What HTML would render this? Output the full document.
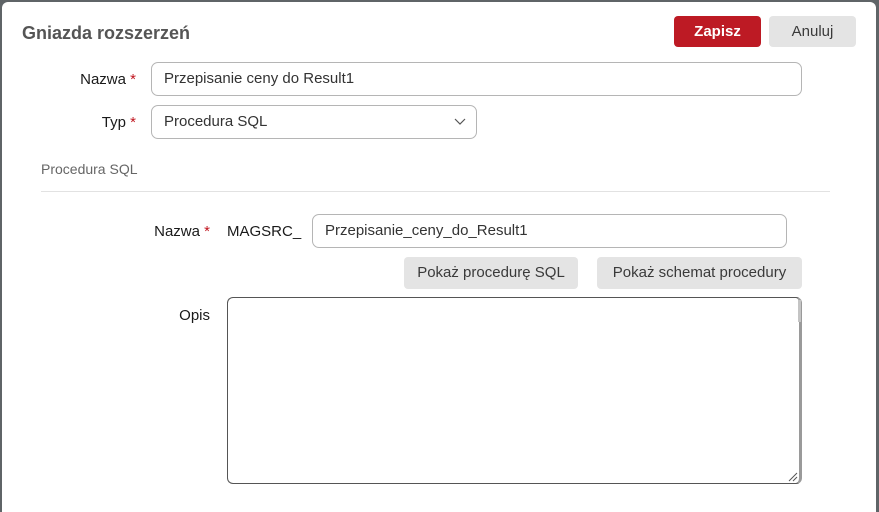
<!DOCTYPE html>
<html><head><meta charset="utf-8"><style>
*{box-sizing:border-box}
html{overflow:hidden;width:879px;height:512px}
body{margin:0;width:879px;height:512px;background:#5f6467;font-family:"Liberation Sans",Roboto,sans-serif;position:relative;overflow:hidden}
.dlg{position:absolute;left:2px;top:2px;width:874px;height:520px;background:#fff;border-radius:6px 6px 0 0}
.a{position:absolute}
.t{font-size:18px;font-weight:bold;color:#555;left:22px;top:23px}
.lbl{font-size:15px;color:#1a1a1a;text-align:right}
.st{color:#c0141e}
.inp{border:1px solid #b5b5b5;border-radius:7px;font-size:15px;color:#333;padding-left:12px;line-height:32px;height:34px}
.btn{border-radius:4px;font-size:15px;text-align:center;line-height:31px;height:31px;color:#3a3a3a;background:#e4e4e4}
</style></head><body>
<div class="dlg"></div>
<div class="a t">Gniazda rozszerzeń</div>
<div class="a btn" style="left:674px;top:16px;width:87px;background:#bd1a24;color:#fff;font-weight:bold">Zapisz</div>
<div class="a btn" style="left:769px;top:16px;width:87px">Anuluj</div>
<div class="a lbl" style="left:60px;top:71px;width:76px">Nazwa <span class="st">*</span></div>
<div class="a inp" style="left:151px;top:62px;width:651px">Przepisanie ceny do Result1</div>
<div class="a lbl" style="left:60px;top:114px;width:76px">Typ <span class="st">*</span></div>
<div class="a inp" style="left:151px;top:105px;width:326px">Procedura SQL
<svg style="position:absolute;right:10px;top:12px" width="12" height="8"><path d="M1 1L6 6L11 1" stroke="#555" fill="none" stroke-width="1.2"/></svg></div>
<div class="a" style="left:41px;top:161px;font-size:14px;color:#666">Procedura SQL</div>
<div class="a" style="left:41px;top:191px;width:789px;height:1px;background:#e2e2e2"></div>
<div class="a lbl" style="left:130px;top:223px;width:80px">Nazwa <span class="st">*</span></div>
<div class="a lbl" style="left:227px;top:223px;text-align:left">MAGSRC_</div>
<div class="a inp" style="left:312px;top:214px;width:475px">Przepisanie_ceny_do_Result1</div>
<div class="a btn" style="left:404px;top:257px;width:174px;height:32px;line-height:31px">Pokaż procedurę SQL</div>
<div class="a btn" style="left:597px;top:257px;width:205px;height:32px;line-height:31px">Pokaż schemat procedury</div>
<div class="a lbl" style="left:150px;top:307px;width:60px">Opis</div>
<div class="a" style="left:227px;top:297px;width:575px;height:187px;border:1px solid #555;border-right:3px solid #9a9a9a;border-radius:6px"></div>
<div class="a" style="left:798px;top:300px;width:3px;height:22px;background:#c4c4c4"></div>
<svg class="a" style="left:788px;top:472px" width="10" height="10"><path d="M1 9L9 1M5 9L9 5" stroke="#555"/></svg>
</body></html>
